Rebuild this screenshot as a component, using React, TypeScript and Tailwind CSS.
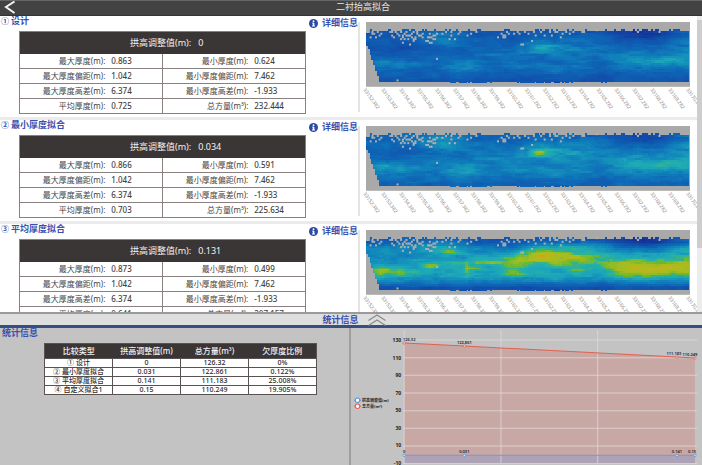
import React from "react";

type Field = "base" | "min" | "avg";

interface Section {
  mark: string;
  title: string;
  adjust: string;
  rows: [string, string, string, string][];
  field: Field;
}

const makeRows = (a: string, b: string, c: string, d: string): Section["rows"] => [
  ["最大厚度(m):", a, "最小厚度(m):", b],
  ["最大厚度偏距(m):", "1.042", "最小厚度偏距(m):", "7.462"],
  ["最大厚度高差(m):", "6.374", "最小厚度高差(m):", "-1.933"],
  ["平均厚度(m):", c, "总方量(m³):", d],
];

const sections: Section[] = [
  { mark: "①", title: "设计", adjust: "0", rows: makeRows("0.863", "0.624", "0.725", "232.444"), field: "base" },
  { mark: "②", title: "最小厚度拟合", adjust: "0.034", rows: makeRows("0.866", "0.591", "0.703", "225.634"), field: "min" },
  { mark: "③", title: "平均厚度拟合", adjust: "0.131", rows: makeRows("0.873", "0.499", "0.641", "207.157"), field: "avg" },
];

const stats = [
  ["① 设计", "0", "126.32", "0%"],
  ["② 最小厚度拟合", "0.031", "122.861", "0.122%"],
  ["③ 平均厚度拟合", "0.141", "111.183", "25.008%"],
  ["④ 自定义拟合1", "0.15", "110.249", "19.905%"],
];

/* ---------- thickness heat map ---------- */

const COLS = 180;
const ROWS = 36;
const CELL = 1.8;

// Cells without a measurement, as [column, row].
const holes: [number, number][] = [
  [0, 5], [1, 5], [3, 6], [4, 6], [2, 8], [6, 5], [7, 7], [5, 8], [8, 6], [3, 5],
  [13, 5], [14, 5], [14, 7], [15, 8], [17, 6], [16, 5], [19, 5], [18, 7], [19, 9], [20, 7], [20, 8],
  [21, 6], [22, 5], [23, 7], [22, 7], [23, 9], [21, 9], [25, 6], [24, 7], [26, 5], [25, 8], [26, 9], [27, 9],
  [20, 11], [24, 12], [27, 8], [28, 6], [29, 7], [30, 7], [31, 6], [26, 10], [31, 8], [28, 5],
  [34, 8], [35, 6], [34, 10], [35, 11], [36, 8], [37, 7], [37, 9], [36, 11], [33, 10], [38, 7], [39, 6], [35, 8], [38, 9],
  [39, 20], [17, 32], [42, 6], [44, 5], [47, 5], [47, 7], [46, 9], [49, 9], [51, 6], [56, 7], [52, 5], [58, 6], [61, 5], [60, 4],
  [73, 8], [75, 6], [76, 7], [76, 8], [77, 7], [77, 8], [78, 5], [79, 6], [82, 6], [85, 6], [84, 5],
  [88, 5], [87, 12], [86, 12], [90, 6], [92, 10], [94, 7], [93, 5], [97, 5], [99, 7], [102, 5], [103, 7],
  [105, 5], [108, 8], [109, 6], [106, 5], [113, 6], [115, 5], [111, 5], [120, 5], [121, 5], [128, 4],
  [147, 4], [150, 4], [151, 5], [152, 4], [163, 5],
];

function hash(x: number, y: number): number {
  const s = Math.sin(x * 127.1 + y * 311.7) * 43758.5453;
  return s - Math.floor(s);
}

function noise(x: number, y: number): number {
  const ix = Math.floor(x);
  const iy = Math.floor(y);
  const fx = x - ix;
  const fy = y - iy;
  const u = fx * fx * (3 - 2 * fx);
  const v = fy * fy * (3 - 2 * fy);
  const top = hash(ix, iy) * (1 - u) + hash(ix + 1, iy) * u;
  const low = hash(ix, iy + 1) * (1 - u) + hash(ix + 1, iy + 1) * u;
  return top * (1 - v) + low * v;
}

// Peaks: centre x, centre y, spread x, spread y, height in base, height in avg.
const peaks: number[][] = [
  [176, 26, 11, 3, 0.14, 0.14],
  [182, 27, 30, 7, 0.12, 0.26],
  [218, 29, 14, 4, 0.04, 0.08],
  [150, 32, 9, 6, 0.02, 0.12],
  [302, 39, 22, 4, 0.15, 0.1],
  [262, 38, 20, 7, 0.1, 0.23],
  [312, 37, 22, 6, 0.08, 0.2],
  [285, 42, 12, 4, 0.02, 0.08],
  [30, 41, 14, 3, 0.12, 0.17],
  [14, 43, 5, 5, 0.08, 0.14],
  [98, 46, 14, 5, 0.12, 0.02],
  [101, 40, 2, 6, 0.02, 0.12],
  [92, 33, 12, 2, 0.02, 0.15],
  [122, 31, 12, 3, 0.06, 0.18],
  [108, 38, 7, 1.5, 0.02, 0.12],
  [64, 36, 6, 2, 0.03, 0.2],
  [85, 22, 6, 1.5, 0.02, 0.16],
  [146, 43, 10, 2.5, 0.07, 0.15],
  [210, 41, 6, 2, 0.05, 0.15],
  [75, 14, 18, 6, 0.16, 0.1],
  [205, 47, 30, 5, 0.05, 0.0],
  [322, 20, 12, 7, 0.1, 0.06],
  [276, 12, 24, 6, -0.2, -0.28],
  [136, 18, 24, 7, -0.08, -0.17],
  [40, 26, 30, 7, -0.12, -0.08],
  [8, 18, 10, 8, -0.04, -0.06],
  [232, 50, 12, 8, -0.06, -0.04],
];

function thickness(x: number, y: number, field: Field): number {
  let v = field === "avg" ? 0.51 : field === "min" ? 0.37 : 0.29;
  for (const [cx, cy, sx, sy, base, avg] of peaks) {
    const g = Math.exp(-((x - cx) ** 2) / (2 * sx * sx) - (y - cy) ** 2 / (2 * sy * sy));
    v += g * (field === "avg" ? avg : base);
  }
  if (field === "min") {
    v += 0.14 * Math.exp(-((x - 171) ** 2) / 60 - (y - 27) ** 2 / 6);
  }
  const edge = field === "avg" ? 0.36 : 0.1;
  v -= edge * Math.exp(-((y - 60) ** 2) / 55);
  v -= edge * 0.7 * Math.exp(-((y - 9) ** 2) / 45);
  v += (noise(x / 16, y / 3) - 0.5) * 0.1;
  v += (noise(x / 7 + 40, y / 2 + 9) - 0.5) * 0.08;
  return Math.max(0, Math.min(1, v));
}

const ramp: [number, number, number, number][] = [
  [0, 20, 48, 150],
  [0.15, 16, 78, 170],
  [0.3, 14, 102, 182],
  [0.42, 16, 132, 186],
  [0.54, 28, 166, 186],
  [0.62, 40, 178, 160],
  [0.65, 100, 184, 54],
  [0.74, 160, 188, 34],
  [0.86, 186, 184, 26],
  [1, 204, 150, 18],
];

function rampColor(v: number): string {
  let i = 1;
  while (i < ramp.length - 1 && v > ramp[i][0]) i++;
  const a = ramp[i - 1];
  const b = ramp[i];
  const t = (v - a[0]) / (b[0] - a[0]);
  const mix = (k: number) => Math.round(a[k] + (b[k] - a[k]) * t);
  return `rgb(${mix(1)},${mix(2)},${mix(3)})`;
}

function covered(c: number, r: number): boolean {
  const top = hash(c, 3) > 0.75 ? 4 : 5;
  if (r < top) return false;
  const ragged = (c > 46 && c < 70) || (c > 83 && c < 115) || (c > 130 && c < 135);
  const bottom = ragged && hash(c, 7) > 0.35 ? 33 : 32;
  if (r > bottom) return false;
  return !(r > 12 && c < ((r - 12) / 20) * 7);
}

function buildRuns(field: Field) {
  const runs: { x: number; y: number; n: number; fill: string }[] = [];
  for (let r = 0; r < ROWS; r++) {
    for (let c = 0; c < COLS; c++) {
      if (!covered(c, r)) continue;
      const level = Math.round(thickness((c + 0.5) * CELL, (r + 0.5) * CELL, field) * 32) / 32;
      const fill = rampColor(level);
      const last = runs[runs.length - 1];
      if (last && last.y === r && last.x + last.n === c && last.fill === fill) last.n++;
      else runs.push({ x: c, y: r, n: 1, fill });
    }
  }
  return runs;
}

const mileage = Array.from({ length: 19 }, (_, i) => `${33152 + i}.${i < 9 ? "382" : "282"}`);

function HeatMap({ field, title }: { field: Field; title: string }) {
  const runs = React.useMemo(() => buildRuns(field), [field]);
  return (
    <svg viewBox="0 0 332 90" className="block w-full overflow-visible" role="img" aria-label={title}>
      <rect width="325" height="65" fill="#a9a9a9" />
      <g shapeRendering="crispEdges">
        {runs.map((s, i) => (
          <rect key={i} x={s.x * CELL} y={s.y * CELL} width={s.n * CELL + 0.3} height={CELL + 0.3} fill={s.fill} />
        ))}
      </g>
      <g fill="#b0b0b0">
        {holes.map(([c, r]) => (
          <rect key={`${c}-${r}`} x={c * CELL} y={r * CELL} width="2" height="2" />
        ))}
      </g>
      <g fontSize="5" fill="#8c8c8c">
        {mileage.map((m, i) => (
          <text key={m} transform={`translate(${i * 18 - 3} 68) rotate(54)`}>
            {m}
          </text>
        ))}
      </g>
    </svg>
  );
}

/* ---------- statistics chart ---------- */

const xs = [53, 113, 325, 343];
const reds = [15, 18, 29, 30];
const redLabels = ["126.32", "122.861", "111.183", "110.249"];
const blueLabels = ["0", "0.031", "0.141", "0.15"];
const ticks = [130, 110, 90, 70, 50, 30, 10, -10];

function StatChart() {
  const line = xs.map((x, i) => `${x},${reds[i]}`).join(" ");
  return (
    <svg viewBox="0 0 350 137" className="block w-full" role="img" aria-label="统计信息">
      <polygon points={`${line} 343,135 53,135`} fill="#d4756c" fillOpacity="0.34" />
      <rect x="53" y="127" width="290" height="8" fill="#8a9ad0" fillOpacity="0.42" />
      <g stroke="#e2dada" strokeOpacity="0.75" strokeWidth="1">
        {ticks.map((t, i) => (
          <line key={t} x1="52" x2="345" y1={12 + i * 17.6} y2={12 + i * 17.6} />
        ))}
        {[53, 149.5, 246].map((x) => (
          <line key={x} x1={x} x2={x} y1="2" y2="135" />
        ))}
      </g>
      <g fontSize="5" fontWeight="700" fill="#222" textAnchor="end">
        {ticks.map((t, i) => (
          <text key={t} x="50" y={14 + i * 17.5}>
            {t}
          </text>
        ))}
      </g>
      <polyline points={line} fill="none" stroke="#e0614f" strokeWidth="1" />
      <line x1="53" x2="343" y1="127" y2="127" stroke="#7f92cc" strokeWidth="1" />
      {xs.map((x, i) => (
        <g key={x}>
          <circle cx={x} cy={reds[i]} r="1.2" fill="#f6e4e0" stroke="#e0614f" strokeWidth="0.8" />
          <circle cx={x} cy="127" r="1.2" fill="#d9e8f6" stroke="#5a94d8" strokeWidth="0.8" />
        </g>
      ))}
      <g fontSize="4" fontWeight="600" fill="#222" textAnchor="middle">
        {xs.map((x, i) => (
          <React.Fragment key={x}>
            <text x={[58, 113, 322, 338][i]} y={reds[i] - 2}>{redLabels[i]}</text>
            <text x={i === 3 ? x - 3 : x} y="125">{blueLabels[i]}</text>
          </React.Fragment>
        ))}
      </g>
      <g fontSize="4" fontWeight="700" fill="#222">
        <line x1="3" x2="10" y1="72" y2="72" stroke="#5a94d8" />
        <circle cx="6.5" cy="72" r="2.2" fill="#fff" stroke="#5a94d8" />
        <text x="11" y="73.5">拱高调整值(m)</text>
        <line x1="3" x2="10" y1="78" y2="78" stroke="#e0614f" />
        <circle cx="6.5" cy="78" r="2.2" fill="#fff" stroke="#e0614f" />
        <text x="11" y="79.5">总方量(m³)</text>
      </g>
    </svg>
  );
}

/* ---------- page parts ---------- */

function InfoIcon() {
  return (
    <svg viewBox="0 0 16 16" className="size-[9px]" aria-hidden="true">
      <circle cx="8" cy="8" r="8" fill="#2a4ba0" />
      <circle cx="8" cy="4" r="1.6" fill="#fff" />
      <path d="M5.5 6.5h4v5.2h1.3v1.5H5.3v-1.5h1.4V8H5.5z" fill="#fff" />
    </svg>
  );
}

function FitSection({ section }: { section: Section }) {
  return (
    <section className="grid h-[104px] shrink-0 grid-cols-[358fr_339fr] border-b-3 border-[#ebebeb] bg-white">
      <div>
        <div className="flex h-[15px] items-start justify-between text-[9px] leading-[10px] font-bold text-[#3a4fae]">
          <h2 className="flex gap-[2px] pl-px">
            <span className="text-[8px]">{section.mark}</span>
            <span>{section.title}</span>
          </h2>
          <button type="button" className="flex items-center gap-1 leading-[14px]">
            <InfoIcon />
            详细信息
          </button>
        </div>
        <table className="ml-[19px] w-[calc(100%-71px)] table-fixed border-collapse border border-[#8a8080] text-[8px] leading-[14px] text-[#453f3f]">
          <colgroup>
            <col className="w-[30%]" />
            <col className="w-[20%]" />
            <col className="w-[30%]" />
            <col className="w-[20%]" />
          </colgroup>
          <thead>
            <tr className="h-[22px] bg-[#3b3636] text-[9px] text-[#f2f2f2]">
              <th colSpan={4} className="pl-[110px] text-left font-normal">
                拱高调整值(m):&nbsp;&nbsp; {section.adjust}
              </th>
            </tr>
          </thead>
          <tbody>
            {section.rows.map(([l1, v1, l2, v2]) => (
              <tr key={l1} className="h-[15px] border-b border-[#8a8080]">
                <th scope="row" className="text-right font-normal whitespace-nowrap">{l1}</th>
                <td className="border-r border-[#8a8080] pl-[6px] font-medium">{v1}</td>
                <th scope="row" className="text-right font-normal whitespace-nowrap">{l2}</th>
                <td className="pl-[6px] font-medium">{v2}</td>
              </tr>
            ))}
          </tbody>
        </table>
      </div>
      <div className="pt-[6px]">
        <div className="h-[90px] border-l-2 border-[#e4e4e4] pl-[6px]">
          <HeatMap field={section.field} title={section.title} />
        </div>
      </div>
    </section>
  );
}

export default function App() {
  return (
    <div className="flex h-screen flex-col overflow-hidden bg-white font-['Noto_Sans','Noto_Sans_CJK_SC',sans-serif]">
      <header className="relative flex h-4 shrink-0 items-center justify-center border-t border-b border-t-[#666] border-b-[#333] bg-[#434343]">
        <button type="button" aria-label="返回" className="absolute top-0 left-1">
          <svg viewBox="0 0 12 13" className="h-[13px] w-3" fill="none" stroke="#f4f4f4" strokeWidth="2">
            <path d="M10.5 0.5L2 6l8.500 6" />
          </svg>
        </button>
        <h1 className="pb-[3px] pl-6 text-[9px] leading-[10px] text-[#e6e6e6]">二衬抬高拟合</h1>
      </header>

      <main className="flex min-h-0 flex-1">
        <div className="flex min-w-0 flex-1 flex-col overflow-hidden">
          {sections.map((s) => (
            <FitSection key={s.mark} section={s} />
          ))}
        </div>
        <div className="flex w-[5px] flex-col bg-[#ececec] pt-1">
          <div className="h-[78%] bg-[#cdcdcd]" />
        </div>
      </main>

      <div className="flex h-4 shrink-0 items-center justify-center gap-[9px] border-t-2 border-b-3 border-t-[#9a9a9a] border-b-[#35507f] bg-[#dedede] pl-[6px]">
        <span className="text-[9px] leading-[10px] font-bold text-[#3a4fae]">统计信息</span>
        <button type="button" aria-label="收起">
          <svg viewBox="0 0 18 12" className="h-3 w-[18px]" fill="none" stroke="#8a8a8a" strokeWidth="1.2">
            <path d="M0.500 6.500L9 1l8.500 5.500M0.500 11.500L9 6l8.500 5.500" />
          </svg>
        </button>
      </div>

      <div className="grid h-[137px] shrink-0 grid-cols-2 bg-[#c3c3c3]">
        <div className="border-r-2 border-[#a39e9e]">
          <h2 className="h-[15px] pl-[2px] text-[9px] leading-[10px] font-bold text-[#3a4fae]">统计信息</h2>
          <table className="ml-[44px] w-[calc(100%-76px)] table-fixed border-collapse border border-[#5a5252] bg-white text-center text-[7px] leading-[8px] font-medium text-[#2c2828]">
            <thead>
              <tr className="h-[15px] bg-[#3b3636] text-[8px] text-[#f2f2f2]">
                {["比较类型", "拱高调整值(m)", "总方量(m³)", "欠厚度比例"].map((h) => (
                  <th key={h} className="font-medium">{h}</th>
                ))}
              </tr>
            </thead>
            <tbody>
              {stats.map((row) => (
                <tr key={row[0]}>
                  {row.map((cell, i) => (
                    <td key={i} className="border border-[#5a5252]">{cell}</td>
                  ))}
                </tr>
              ))}
            </tbody>
          </table>
        </div>
        <StatChart />
      </div>
    </div>
  );
}
